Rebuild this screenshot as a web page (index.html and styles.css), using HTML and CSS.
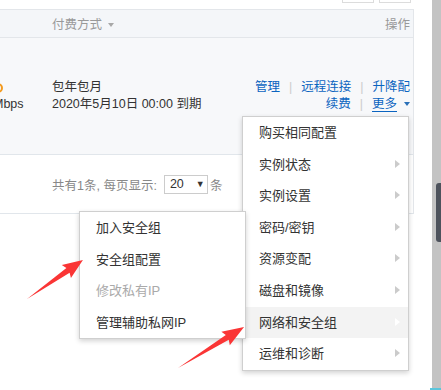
FILE: index.html
```html
<!DOCTYPE html>
<html lang="zh-CN">
<head>
    <meta charset="UTF-8">
    <title>实例列表</title>
    <link rel="stylesheet" href="styles.css">
</head>
<body>
    <div class="page">
        <div class="main">
            <div class="toolbar">
                <span class="tool-btn"></span>
                <span class="tool-btn"></span>
            </div>

            <div class="table">
                <!-- 表头 -->
                <div class="thead">
                    <div class="col-left"></div>
                    <div class="col-pay">付费方式 <i class="caret"></i></div>
                    <div class="col-ops">操作</div>
                </div>

                <!-- 实例行 -->
                <div class="trow">
                    <div class="col-left">
                        <span class="cut-dot"></span>
                        <span class="cut-text">Mbps</span>
                    </div>
                    <div class="col-pay">
                        <span>包年包月</span>
                        <span>2020年5月10日 00:00 到期</span>
                    </div>
                    <div class="col-ops">
                        <div class="ops-line">
                            <a>管理</a><span class="sep">|</span><a>远程连接</a><span class="sep">|</span><a>升降配</a>
                        </div>
                        <div class="ops-line">
                            <a>续费</a><span class="sep">|</span><a class="more">更多</a><i class="caret blue"></i>
                        </div>
                    </div>
                </div>

                <!-- 分页 -->
                <div class="pager">
                    共有1条, 每页显示:
                    <span class="select">20 <i class="sel-arrow">▼</i></span>
                    条
                </div>
            </div>
        </div>

        <div class="scrollbar">
            <div class="thumb"></div>
            <div class="scroll-end"></div>
        </div>

        <!-- 更多 下拉菜单 -->
        <ul class="menu main-menu">
            <li>购买相同配置</li>
            <li class="has-sub">实例状态</li>
            <li class="has-sub">实例设置</li>
            <li class="has-sub">密码/密钥</li>
            <li class="has-sub">资源变配</li>
            <li class="has-sub">磁盘和镜像</li>
            <li class="has-sub active">网络和安全组</li>
            <li class="has-sub">运维和诊断</li>
        </ul>

        <!-- 子菜单 -->
        <ul class="menu sub-menu">
            <li>加入安全组</li>
            <li>安全组配置</li>
            <li class="disabled">修改私有IP</li>
            <li>管理辅助私网IP</li>
        </ul>

        <!-- 标注箭头 -->
        <svg class="marks" width="441" height="390" viewBox="0 0 441 390">
            <polygon fill="#fa3535" transform="translate(27,299) rotate(-34.9)"
                     points="0,0 50,-2.8 48,-8 68.2,0 48,8 50,2.8"/>
            <polygon fill="#fa3535" transform="translate(178,368) rotate(-31.8)"
                     points="0,0 58,-2.8 56,-8 77.7,0 56,8 58,2.8"/>
        </svg>
    </div>
</body>
</html>
```

FILE: styles.css
```css
/* Общие стили */
* {
    box-sizing: border-box;
}

body {
    margin: 0;
    background: #fff;
    font-family: "Liberation Sans", "Noto Sans CJK SC", sans-serif;
    font-size: 12.5px;
    color: #333;
}

.page {
    position: relative;
    width: 441px;
    height: 390px;
    overflow: hidden;
    display: flex;
}

.main {
    width: 432px;
    padding-right: 18px;
}

/* верхние кнопки */
.toolbar {
    height: 9px;
    display: flex;
    justify-content: flex-end;
    gap: 5px;
    padding-right: 3px;
}

.tool-btn {
    width: 32px;
    height: 3px;
    border: 1px solid #dcdcdc;
    border-top: none;
}

/* таблица */
.table {
    border-top: 1px solid #e3e6ea;
    border-right: 1px solid #e3e6ea;
    border-bottom: 1px solid #e1e6eb;
}

.thead {
    height: 28px;
    display: flex;
    align-items: center;
    background: #f4f6f9;
    border-bottom: 1px solid #e3e6ea;
    color: #999;
}

.col-left {
    width: 52px;
    flex: none;
}

.col-pay {
    flex: 1;
}

.col-ops {
    text-align: right;
    padding-right: 3px;
}

.caret {
    display: inline-block;
    margin-left: 3px;
    vertical-align: 2px;
    border-top: 4px solid #a8a8a8;
    border-left: 3.5px solid transparent;
    border-right: 3.5px solid transparent;
}

.caret.blue {
    border-top-color: #2a70b8;
    margin-left: 7px;
}

.trow {
    height: 117px;
    display: flex;
    align-items: center;
    background: #f7f8fa;
    border-bottom: 1px solid #e1e6eb;
    line-height: 17px;
}

.trow .col-left,
.trow .col-pay {
    display: flex;
    flex-direction: column;
}

.cut-dot {
    width: 10px;
    height: 10px;
    margin: 4px 0 3px -7px;
    border-radius: 50%;
    border: 2px solid #f39a1e;
}

.cut-text {
    margin-left: -7px;
}

.ops-line a {
    color: #0b64c0;
}

.sep {
    color: #ccc;
    margin: 0 9px;
}

.more {
    border-bottom: 1px solid #0b64c0;
}

.pager {
    height: 58px;
    display: flex;
    align-items: center;
    padding-left: 52px;
    color: #888;
}

.select {
    display: inline-flex;
    align-items: center;
    width: 44px;
    height: 19px;
    margin: 0 2px 0 7px;
    padding-left: 5px;
    border: 1px solid #ccc;
    color: #333;
    background: #fff;
}

.sel-arrow {
    font-style: normal;
    font-size: 9px;
    margin-left: 12px;
}

/* скроллбар */
.scrollbar {
    position: relative;
    width: 9px;
    height: 390px;
    background: #c3c3c3;
}

.thumb {
    margin: 183px 0 0 4px;
    height: 59px;
    background: #4d525c;
    border-radius: 3px 0 0 3px;
}

.scroll-end {
    position: absolute;
    left: -2px;
    right: 0;
    bottom: 0;
    height: 2px;
    background: #5bc6dc;
}

/* меню */
.menu {
    position: absolute;
    margin: 0;
    padding: 0;
    list-style: none;
    background: #fff;
    border: 1px solid #cfcfcf;
    box-shadow: 0 2px 5px rgba(0, 0, 0, 0.18);
    font-size: 13px;
    color: #333;
}

.menu li {
    position: relative;
    height: 31.6px;
    line-height: 31.6px;
    padding-left: 16px;
}

.main-menu {
    left: 242px;
    top: 116px;
    width: 167px;
}

.sub-menu {
    left: 79px;
    top: 211px;
    width: 167px;
}

.menu li.has-sub::after {
    content: "";
    position: absolute;
    right: 8px;
    top: 11px;
    border-left: 5px solid #cbcbcb;
    border-top: 4.5px solid transparent;
    border-bottom: 4.5px solid transparent;
}

.menu li.active {
    background: #f3f3f3;
}

.menu li.active::after {
    border-left-color: #fff;
}

.menu li.disabled {
    color: #aaa;
}

.marks {
    position: absolute;
    left: 0;
    top: 0;
    pointer-events: none;
}
```
